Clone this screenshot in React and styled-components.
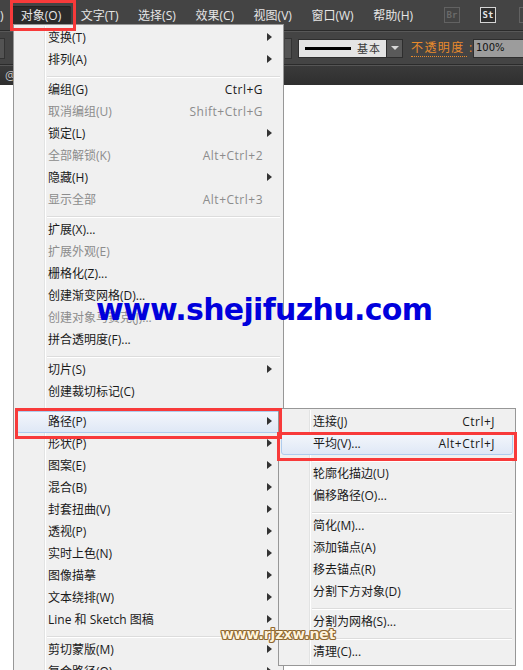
import React from "react";
import styled, { createGlobalStyle } from "styled-components";

const GlobalStyle = createGlobalStyle`
  html, body {
    margin: 0;
    padding: 0;
    background: #fff;
  }
  body {
    font-family: "Open Sans", "Noto Sans CJK SC", sans-serif;
    font-size: 12px;
  }
`;

const Page = styled.div`
  position: relative;
  width: 523px;
  height: 670px;
  overflow: hidden;
  display: flex;
  flex-direction: column;
  background: #fff;
`;

const MenuBar = styled.div`
  height: 30px;
  flex: none;
  display: flex;
  align-items: center;
  background: #444;
  border-bottom: 1px solid #2b2b2b;
  color: #e6e6e6;
  font-size: 12px;
`;

const ClippedParen = styled.span`
  width: 11px;
  flex: none;
`;

const BarItem = styled.span`
  height: 19px;
  line-height: 19px;
  padding: 0 9.8px;
  white-space: nowrap;
  border-radius: 2px;
  background: ${p => (p.$active ? "#2b2b2b" : "transparent")};
  box-shadow: ${p => (p.$active ? "inset 0 1px 0 #222, 0 1px 0 #555" : "none")};
`;

const BarDivider = styled.span`
  width: 1px;
  height: 20px;
  background: #2c2c2c;
  box-shadow: 1px 0 0 #565656;
  margin: 0 16px 0 5px;
`;

const AppBadge = styled.span`
  box-sizing: border-box;
  width: 16px;
  height: 16px;
  flex: none;
  margin-right: ${p => p.$space || 0}px;
  display: flex;
  align-items: center;
  justify-content: center;
  font-family: "DejaVu Sans Mono", monospace;
  font-size: 9px;
  font-weight: 700;
  border: 1px solid ${p => (p.$on ? "#d4d4d4" : "#626262")};
  background: ${p => (p.$on ? "#2e2e2e" : "transparent")};
  color: ${p => (p.$on ? "#e4e4e4" : "#6a6a6a")};
`;

const Toolbar = styled.div`
  box-sizing: border-box;
  height: 34px;
  flex: none;
  display: flex;
  align-items: center;
  background: #444;
  border-top: 1px solid #585858;
  border-bottom: 1px solid #2b2b2b;
`;

const StubField = styled.span`
  width: 4px;
  height: 19px;
  flex: none;
  margin-right: 280px;
  background: #535353;
  border: 1px solid #333;
  border-left: 0;
`;

const StubDrop = styled.span`
  width: 6px;
  height: 19px;
  flex: none;
  background: #535353;
  border: 1px solid #333;
  border-left: 0;
  margin-right: 6px;
`;

const StrokePreview = styled.div`
  box-sizing: border-box;
  width: 89px;
  height: 19px;
  flex: none;
  display: flex;
  align-items: center;
  gap: 6px;
  padding: 0 5px 0 6px;
  background: #e4e4e4;
  border: 1px solid #2e2e2e;
  color: #3a3a3a;
  font-size: 11px;
  letter-spacing: 1px;
  white-space: nowrap;
`;

const StrokeLine = styled.span`
  width: 46px;
  height: 3px;
  flex: none;
  background: #000;
`;

const DropButton = styled.span`
  box-sizing: border-box;
  width: 16px;
  height: 19px;
  flex: none;
  display: flex;
  align-items: center;
  justify-content: center;
  background: #5a5a5a;
  border: 1px solid #2e2e2e;
  border-left: 0;
  &::after {
    content: "";
    border-left: 4px solid transparent;
    border-right: 4px solid transparent;
    border-top: 4px solid #d8d8d8;
  }
`;

const OpacityLabel = styled.span`
  width: 56px;
  flex: none;
  margin-left: 8px;
  color: #e88a2c;
  font-size: 12px;
  line-height: 16px;
  letter-spacing: 1.4px;
  white-space: nowrap;
  border-bottom: 1px dotted #e88a2c;
`;

const OpacityField = styled.span`
  box-sizing: border-box;
  margin-left: 6px;
  flex: 1;
  height: 19px;
  line-height: 15px;
  padding-left: 2px;
  background: #9c9c9c;
  border: 1px solid #2e2e2e;
  border-right: 0;
  color: #111;
  font-family: "DejaVu Sans", sans-serif;
  font-size: 10px;
`;

const TabStrip = styled.div`
  box-sizing: border-box;
  height: 20px;
  flex: none;
  padding-left: 5px;
  background: linear-gradient(#3a3a3a, #2f2f2f);
  border-top: 1px solid #555;
  color: #c4c4c4;
  line-height: 19px;
`;

const Canvas = styled.div`
  flex: 1;
  background: #fff;
`;

const Dropdown = styled.div`
  position: absolute;
  left: ${p => p.$left}px;
  top: ${p => p.$top}px;
  width: ${p => p.$width}px;
  height: ${p => (p.$height ? `${p.$height}px` : "auto")};
  box-sizing: border-box;
  padding: 2px;
  background: #f0f0f0;
  border: 1px solid #979797;
  color: #111;
  font-size: 12px;
  z-index: ${p => p.$layer};
  &::before {
    content: "";
    position: absolute;
    top: 1px;
    bottom: 1px;
    left: 30px;
    width: 1px;
    background: #e2e3e3;
    box-shadow: 1px 0 0 #fff;
  }
`;

const Row = styled.div`
  position: relative;
  box-sizing: border-box;
  height: 22px;
  display: flex;
  align-items: center;
  padding: 0 ${p => (p.$hasShortcut ? 17 : 8)}px 2px 31px;
  color: ${p => (p.$disabled ? "#8c8c8c" : "#1a1a1a")};
  white-space: nowrap;
  border-radius: 3px;
  border: 1px solid ${p => (p.$hot ? "#aeccee" : "transparent")};
  background: ${p => (p.$hot ? "linear-gradient(#f3f6fb, #dfe8f6)" : "transparent")};
`;

const RowLabel = styled.span`
  flex: 1;
`;

const Shortcut = styled.span`
  letter-spacing: 0.5px;
`;

const Arrow = styled.span`
  width: 0;
  height: 0;
  border-top: 4px solid transparent;
  border-bottom: 4px solid transparent;
  border-left: 5px solid #333;
`;

const Separator = styled.div`
  height: 8px;
  display: flex;
  align-items: center;
  padding-left: 31px;
  margin-right: 1px;
  &::after {
    content: "";
    flex: 1;
    height: 1px;
    margin-top: 3px;
    background: #dcdcdc;
    box-shadow: 0 1px 0 #fff;
  }
`;

const RedBox = styled.div`
  position: absolute;
  box-sizing: border-box;
  left: ${p => p.$x}px;
  top: ${p => p.$y}px;
  width: ${p => p.$w}px;
  height: ${p => p.$h}px;
  border: 3px solid #f83a3a;
  z-index: 5;
`;

const BlueMark = styled.div`
  position: absolute;
  left: 96px;
  top: 289px;
  color: #0000dc;
  font-family: "DejaVu Sans", sans-serif;
  font-weight: 700;
  font-size: 30px;
  letter-spacing: -0.67px;
  line-height: 42px;
  white-space: nowrap;
  z-index: 6;
`;

const BrownMark = styled.div`
  position: absolute;
  left: 221px;
  top: 625px;
  color: #fff3dc;
  font-family: "DejaVu Sans", sans-serif;
  font-weight: 700;
  font-size: 13.85px;
  line-height: 18px;
  white-space: nowrap;
  text-shadow: -1px 0 #8a6430, 1px 0 #8a6430, 0 -1px #8a6430, 0 1px #8a6430, -1px -1px #a67f48, 1px 1px #a67f48, 1px -1px #a67f48, -1px 1px #a67f48;
  z-index: 6;
`;

const objectMenu = [
  { label: "变换(T)", sub: true },
  { label: "排列(A)", sub: true },
  "-",
  { label: "编组(G)", keys: "Ctrl+G" },
  { label: "取消编组(U)", keys: "Shift+Ctrl+G", off: true },
  { label: "锁定(L)", sub: true },
  { label: "全部解锁(K)", keys: "Alt+Ctrl+2", off: true },
  { label: "隐藏(H)", sub: true },
  { label: "显示全部", keys: "Alt+Ctrl+3", off: true },
  "-",
  { label: "扩展(X)..." },
  { label: "扩展外观(E)", off: true },
  { label: "栅格化(Z)..." },
  { label: "创建渐变网格(D)..." },
  { label: "创建对象马赛克(J)...", off: true },
  { label: "拼合透明度(F)..." },
  "-",
  { label: "切片(S)", sub: true },
  { label: "创建裁切标记(C)" },
  "-",
  { label: "路径(P)", sub: true, hot: true },
  { label: "形状(P)", sub: true },
  { label: "图案(E)", sub: true },
  { label: "混合(B)", sub: true },
  { label: "封套扭曲(V)", sub: true },
  { label: "透视(P)", sub: true },
  { label: "实时上色(N)", sub: true },
  { label: "图像描摹", sub: true },
  { label: "文本绕排(W)", sub: true },
  { label: "Line 和 Sketch 图稿", sub: true },
  "-",
  { label: "剪切蒙版(M)", sub: true },
  { label: "复合路径(O)", sub: true },
];

const pathMenu = [
  { label: "连接(J)", keys: "Ctrl+J" },
  { label: "平均(V)...", keys: "Alt+Ctrl+J", hot: true },
  "-",
  { label: "轮廓化描边(U)" },
  { label: "偏移路径(O)..." },
  "-",
  { label: "简化(M)..." },
  { label: "添加锚点(A)" },
  { label: "移去锚点(R)" },
  { label: "分割下方对象(D)" },
  "-",
  { label: "分割为网格(S)..." },
  "-",
  { label: "清理(C)..." },
];

const MenuRows = ({ items }) =>
  items.map((item, i) =>
    item === "-" ? (
      <Separator key={i} />
    ) : (
      <Row key={i} $disabled={item.off} $hot={item.hot} $hasShortcut={!!item.keys}>
        <RowLabel>{item.label}</RowLabel>
        {item.keys && <Shortcut>{item.keys}</Shortcut>}
        {item.sub && <Arrow />}
      </Row>
    )
  );

const bar = ["文字(T)", "选择(S)", "效果(C)", "视图(V)", "窗口(W)", "帮助(H)"];

export default function App() {
  return (
    <Page>
      <GlobalStyle />
      <MenuBar>
        <ClippedParen>)</ClippedParen>
        <BarItem $active>对象(O)</BarItem>
        {bar.map(name => (
          <BarItem key={name}>{name}</BarItem>
        ))}
        <BarDivider />
        <AppBadge $space={20}>Br</AppBadge>
        <AppBadge $on $space={23}>St</AppBadge>
        <AppBadge />
      </MenuBar>
      <Toolbar>
        <StubField />
        <StubDrop />
        <StrokePreview>
          <StrokeLine />
          基本
        </StrokePreview>
        <DropButton />
        <OpacityLabel>不透明度 :</OpacityLabel>
        <OpacityField>100%</OpacityField>
      </Toolbar>
      <TabStrip>@</TabStrip>
      <Canvas />

      <Dropdown $left={13} $top={24} $width={271} $height={660} $layer={1}>
        <MenuRows items={objectMenu} />
      </Dropdown>
      <Dropdown $left={278} $top={408} $width={238} $layer={2}>
        <MenuRows items={pathMenu} />
      </Dropdown>

      <RedBox $x={10} $y={0} $w={66} $h={31} />
      <RedBox $x={15} $y={408} $w={267} $h={31} />
      <RedBox $x={277} $y={432} $w={240} $h={29} />

      <BlueMark>www.shejifuzhu.com</BlueMark>
      <BrownMark>www.rjzxw.net</BrownMark>
    </Page>
  );
}
